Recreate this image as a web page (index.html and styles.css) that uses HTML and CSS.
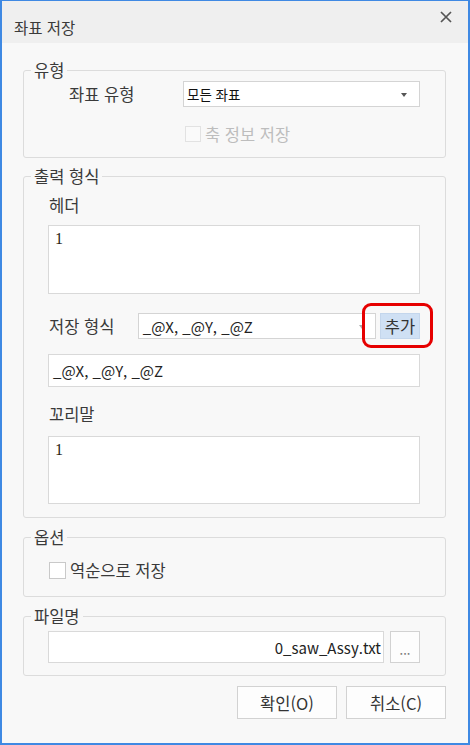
FILE: index.html
```html
<!DOCTYPE html>
<html lang="ko">
<head>
    <meta charset="UTF-8">
    <meta name="viewport" content="width=device-width, initial-scale=1.0">
    <title>좌표 저장</title>
    <link rel="stylesheet" href="styles.css">
</head>
<body>
    <div class="window">
        <div class="titlebar">
            <span class="title">좌표 저장</span>
            <svg class="close" width="12" height="12" viewBox="0 0 12 12">
                <path d="M1 1 L11 11 M11 1 L1 11" stroke="#555" stroke-width="1.7" fill="none"/>
            </svg>
        </div>

        <div class="body">
            <fieldset class="group">
                <legend>유형</legend>
                <div class="group-body type-body">
                    <div class="type-row">
                        <span class="label type-label">좌표 유형</span>
                        <div class="combo combo-type">모든 좌표<span class="arrow"></span></div>
                    </div>
                    <div class="check check-disabled">
                        <span class="box"></span>
                        <span>축 정보 저장</span>
                    </div>
                </div>
            </fieldset>

            <fieldset class="group group-output">
                <legend>출력 형식</legend>
                <div class="group-body output-body">
                    <div class="label head-label">헤더</div>
                    <div class="textbox area area-head">1</div>
                    <div class="format-row">
                        <span class="label format-label">저장 형식</span>
                        <div class="combo combo-format">_@X, _@Y, _@Z<span class="arrow arrow-light"></span></div>
                        <div class="btn btn-add">추가</div>
                        <div class="mark"></div>
                    </div>
                    <div class="textbox line line-format">_@X, _@Y, _@Z</div>
                    <div class="label tail-label">꼬리말</div>
                    <div class="textbox area area-tail">1</div>
                </div>
            </fieldset>

            <fieldset class="group group-option">
                <legend>옵션</legend>
                <div class="group-body option-body">
                    <div class="check">
                        <span class="box"></span>
                        <span>역순으로 저장</span>
                    </div>
                </div>
            </fieldset>

            <fieldset class="group group-file">
                <legend>파일명</legend>
                <div class="group-body file-body">
                    <div class="textbox line file-name">0_saw_Assy.txt</div>
                    <div class="btn btn-browse">...</div>
                </div>
            </fieldset>

            <div class="actions">
                <div class="btn btn-action">확인(O)</div>
                <div class="btn btn-action">취소(C)</div>
            </div>
        </div>
    </div>
</body>
</html>
```

FILE: styles.css
```css
body {
    margin: 0;
    padding: 0;
    font-family: "Noto Sans CJK KR", "Noto Sans", sans-serif;
    color: #333;
    background-color: #f8f8f8;
}
.window {
    box-sizing: border-box;
    width: 470px;
    height: 745px;
    border: 2px solid #3f89e3;
    border-top-width: 1px;
    background-color: #f8f8f8;
}
.titlebar {
    height: 42px;
    background-color: #efefef;
    display: flex;
    align-items: center;
    justify-content: space-between;
    padding: 0 16px 0 12px;
}
.title {
    font-size: 15.5px;
    line-height: 20px;
    color: #3a3a3a;
    margin-top: 10px;
}
.close {
    margin-top: -10px;
}
.body {
    padding: 17px 22px 0 21px;
}

/* skupiny */
.group {
    margin: 0;
    padding: 0;
    border: 1px solid #dcdcdc;
    border-radius: 3px;
    min-width: 0;
}
.group legend {
    font-size: 16.5px;
    line-height: 20px;
    padding: 0 3px;
    margin-left: 7px;
    color: #3a3a3a;
}
.group-output {
    margin-top: 8px;
}
.group-option,
.group-file {
    margin-top: 9px;
}
.group-body {
    padding: 0 25px 0 24px;
}
.type-body {
    padding-top: 1px;
    padding-bottom: 13px;
}
.output-body {
    padding-top: 9px;
    padding-bottom: 13px;
}
.option-body {
    padding-top: 13px;
    padding-bottom: 16px;
}
.file-body {
    padding-top: 5px;
    padding-bottom: 12px;
    display: flex;
    gap: 6px;
}

.label {
    font-size: 16.5px;
    line-height: 20px;
    color: #3a3a3a;
}

/* prvni radek */
.type-row {
    display: flex;
    align-items: center;
}
.type-label {
    width: 114px;
    padding-left: 21px;
}
.combo {
    box-sizing: border-box;
    position: relative;
    height: 26px;
    background-color: #fff;
    border: 1px solid #d4d4d4;
    display: flex;
    align-items: center;
}
.combo-type {
    width: 237px;
    padding-left: 3px;
    font-size: 13.5px;
    color: #111;
}
.arrow {
    position: absolute;
    right: 12px;
    top: 11px;
    width: 0;
    height: 0;
    border-left: 3px solid transparent;
    border-right: 3px solid transparent;
    border-top: 4px solid #555;
}
.arrow-light {
    border-top-color: #aaa;
    right: 10px;
}
.check {
    display: flex;
    align-items: center;
    gap: 4px;
    font-size: 16.5px;
    line-height: 20px;
    color: #3a3a3a;
}
.check .box {
    box-sizing: border-box;
    width: 17px;
    height: 17px;
    border: 1px solid #c9c9c9;
    background-color: #fff;
    margin-left: 1px;
}
.check-disabled {
    margin-top: 17px;
    padding-left: 136px;
    color: #bdbdbd;
}
.check-disabled .box {
    width: 16px;
    height: 16px;
    border-color: #e2e2e2;
    background-color: #fafafa;
}

/* vystup */
.textbox {
    box-sizing: border-box;
    background-color: #fff;
    border: 1px solid #d9d9d9;
}
.area {
    height: 68px;
    padding: 3px 6px;
    font-family: "Liberation Serif", serif;
    font-size: 16px;
    line-height: 20px;
    color: #2a1e16;
}
.area-head {
    margin-top: 10px;
    height: 69px;
}
.area-tail {
    margin-top: 12px;
}
.head-label,
.tail-label {
    padding-left: 1px;
}
.tail-label {
    margin-top: 17px;
}
.format-row {
    position: relative;
    display: flex;
    align-items: center;
    gap: 4px;
    margin-top: 19px;
}
.format-label {
    width: 85px;
    padding-left: 1px;
}
.combo-format {
    width: 239px;
    padding-left: 4px;
    font-size: 15px;
    color: #222;
}
.line {
    height: 33px;
    display: flex;
    align-items: center;
    padding: 0 4px;
    font-size: 15px;
    color: #222;
}
.line-format {
    margin-top: 15px;
}
.btn {
    box-sizing: border-box;
    display: flex;
    align-items: center;
    justify-content: center;
    background-color: #fdfdfd;
    border: 1px solid #d2d2d2;
    font-size: 15px;
    color: #333;
}
.btn-add {
    width: 40px;
    height: 26px;
    background-color: #cfe0f4;
    border-color: #c4d6ec;
    font-size: 16.5px;
}
.mark {
    position: absolute;
    left: 314px;
    top: -10px;
    width: 71px;
    height: 45px;
    box-sizing: border-box;
    border: 3px solid #e60000;
    border-radius: 9px;
}

/* soubor */
.file-name {
    width: 336px;
    height: 32px;
    justify-content: flex-end;
    padding-right: 2px;
}
.btn-browse {
    width: 30px;
    height: 32px;
    color: #777;
    font-size: 13px;
    padding-top: 4px;
}

.actions {
    display: flex;
    justify-content: flex-end;
    gap: 9px;
    margin-top: 10px;
}
.btn-action {
    width: 100px;
    height: 33px;
    font-size: 16.5px;
}
```
